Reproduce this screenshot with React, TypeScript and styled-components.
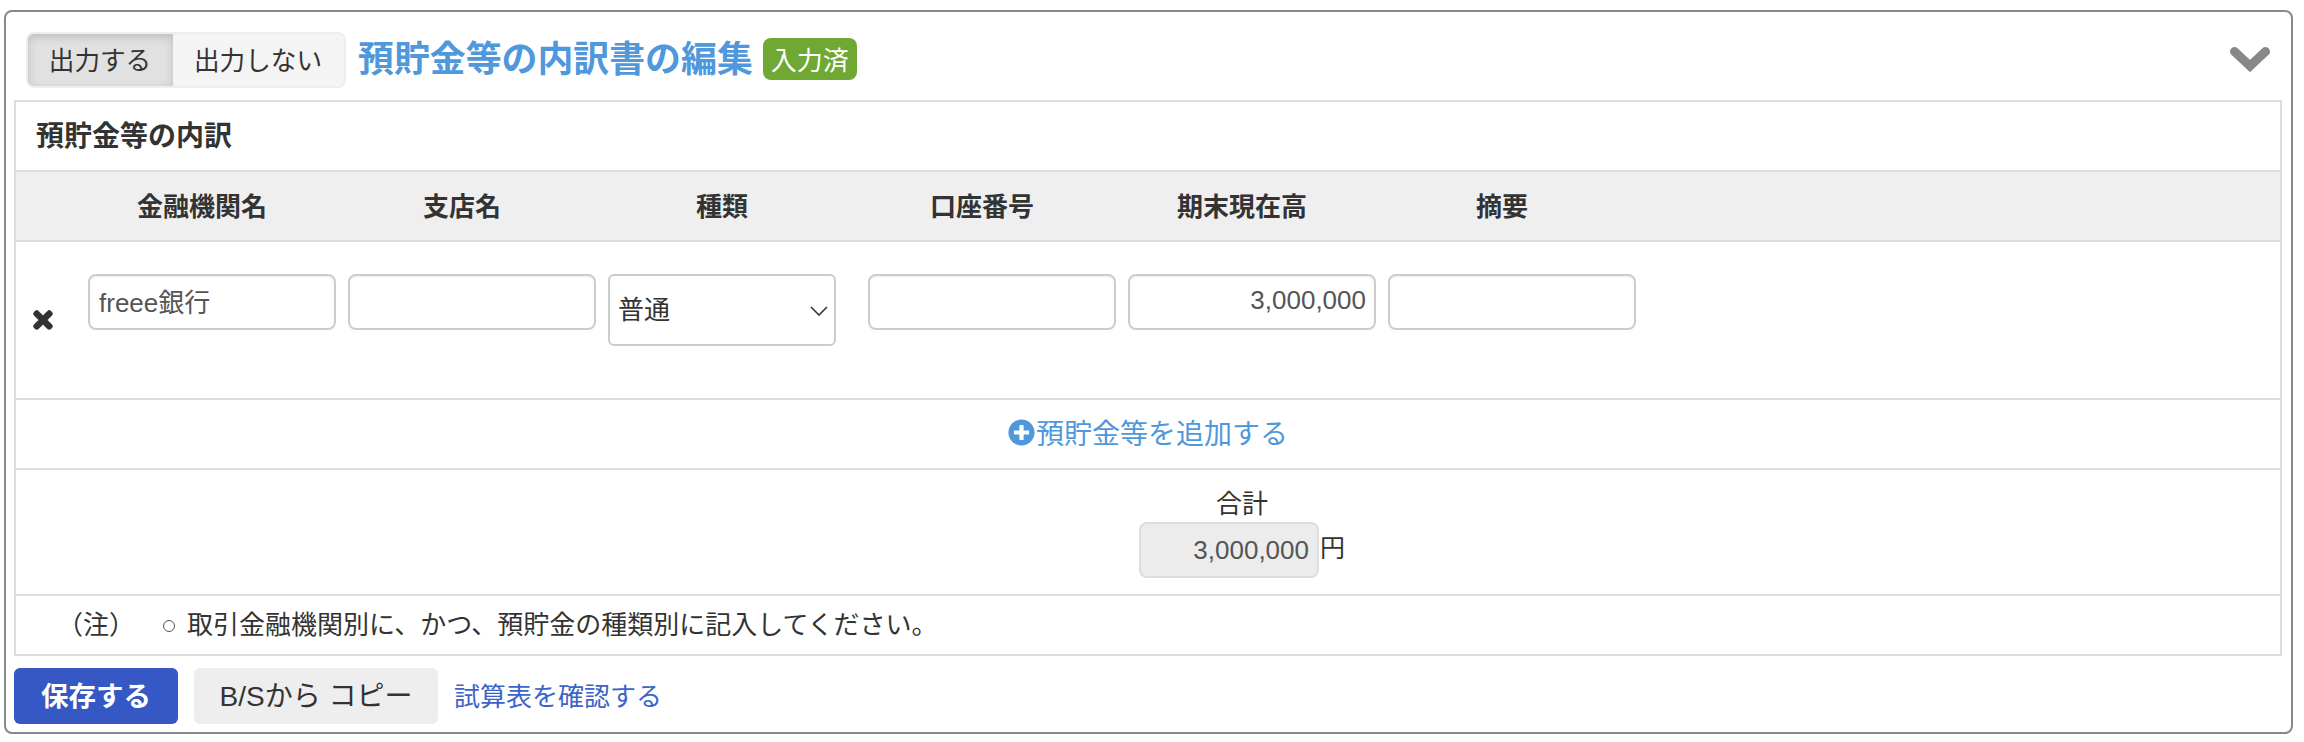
import React from "react";
import styled, { createGlobalStyle } from "styled-components";
import { FaPlusCircle, FaTimes } from "react-icons/fa";

const FONT = `"Liberation Sans", "Noto Sans CJK JP", sans-serif`;

const GlobalStyle = createGlobalStyle`
  * {
    box-sizing: border-box;
  }
  html,
  body {
    margin: 0;
    padding: 0;
    background: #fff;
    font-family: ${FONT};
    color: #333;
  }
`;

const columns = ["金融機関名", "支店名", "種類", "口座番号", "期末現在高", "摘要"];

const App = () => {
  return (
    <Page>
      <GlobalStyle />
      <Panel>
        <PanelHeader>
          <HeaderLeft>
            <Toggle>
              <ToggleButton $active>出力する</ToggleButton>
              <ToggleButton>出力しない</ToggleButton>
            </Toggle>
            <Title>預貯金等の内訳書の編集</Title>
            <Badge>入力済</Badge>
          </HeaderLeft>
          <Chevron viewBox="0 0 40 25" aria-hidden="true">
            <path d="M4.5 4.5 L20 19 L35.5 4.5" />
          </Chevron>
        </PanelHeader>

        <Sheet>
          <SheetTitle>預貯金等の内訳</SheetTitle>
          <ColumnRow>
            <span />
            {columns.map((name) => (
              <ColumnName key={name}>{name}</ColumnName>
            ))}
          </ColumnRow>
          <DataRow>
            <DeleteCell>
              <FaTimes />
            </DeleteCell>
            <TextInput defaultValue="freee銀行" />
            <TextInput />
            <SelectWrap>
              <Select defaultValue="普通">
                <option>普通</option>
                <option>当座</option>
                <option>定期</option>
              </Select>
              <SelectArrow viewBox="0 0 18 10" aria-hidden="true">
                <path d="M1 1 L9 9 L17 1" />
              </SelectArrow>
            </SelectWrap>
            <TextInput />
            <TextInput $right defaultValue="3,000,000" />
            <TextInput />
          </DataRow>
          <AddRow>
            <AddLink href="#">
              <FaPlusCircle />
              預貯金等を追加する
            </AddLink>
          </AddRow>
          <TotalRow>
            <TotalCell>
              <TotalLabel>合計</TotalLabel>
              <TotalLine>
                <TotalInput readOnly value="3,000,000" />
                <Unit>円</Unit>
              </TotalLine>
            </TotalCell>
          </TotalRow>
          <NoteRow>
            <NoteLabel>（注）</NoteLabel>
            <NoteList>
              <NoteItem>取引金融機関別に、かつ、預貯金の種類別に記入してください。</NoteItem>
            </NoteList>
          </NoteRow>
        </Sheet>

        <Footer>
          <SaveButton>保存する</SaveButton>
          <CopyButton>B/Sから コピー</CopyButton>
          <TrialLink href="#">試算表を確認する</TrialLink>
        </Footer>
      </Panel>
    </Page>
  );
};

export default App;

const Page = styled.div`
  width: 2304px;
  height: 742px;
  padding: 10px 11px 0 4px;
  overflow: hidden;
`;

const Panel = styled.section`
  height: 724px;
  border: 2px solid #888;
  border-radius: 8px;
  padding: 20px 9px 8px 8px;
`;

const PanelHeader = styled.header`
  display: flex;
  align-items: center;
  justify-content: space-between;
  height: 56px;
  margin-bottom: 12px;
  padding: 0 12px;
`;

const HeaderLeft = styled.div`
  display: flex;
  align-items: center;
`;

const Toggle = styled.div`
  display: flex;
  width: 320px;
  height: 56px;
  border: 2px solid #eee;
  border-radius: 8px;
  overflow: hidden;
  background: #f5f4f5;
  margin-right: 12px;
`;

const ToggleButton = styled.button<{ $active?: boolean }>`
  flex: ${(p) => (p.$active ? "0 0 145px" : "1")};
  border: 0;
  padding: 0 1px 4px 0;
  font: 25.6px ${FONT};
  color: #333;
  background: ${(p) => (p.$active ? "#e2e1e2" : "transparent")};
  box-shadow: ${(p) => (p.$active ? "inset 0 3px 10px rgba(0, 0, 0, 0.16)" : "none")};
`;

const Title = styled.h1`
  margin: 0 10px 0 0;
  font-size: 35.9px;
  font-weight: 700;
  line-height: 56px;
  color: #4f98dc;
  white-space: nowrap;
`;

const Badge = styled.span`
  display: flex;
  align-items: center;
  justify-content: center;
  width: 94px;
  height: 42px;
  margin-top: -2px;
  padding-bottom: 2px;
  border-radius: 8px;
  background: #6fa832;
  color: #fff;
  font-size: 26px;
`;

const Chevron = styled.svg`
  width: 40px;
  height: 25px;
  margin-top: -2px;
  fill: none;
  stroke: #888;
  stroke-width: 9;
  stroke-linecap: round;
  stroke-linejoin: miter;
`;

const Sheet = styled.div`
  border: 2px solid #ddd;
`;

const SheetTitle = styled.h2`
  margin: 0;
  height: 70px;
  padding: 0 0 4px 20px;
  display: flex;
  align-items: center;
  font-size: 28px;
  font-weight: 700;
  border-bottom: 2px solid #ddd;
`;

const ColumnRow = styled.div`
  display: grid;
  grid-template-columns: 56px repeat(6, 260px);
  align-items: center;
  height: 70px;
  padding-bottom: 4px;
  background: #efefef;
  border-bottom: 2px solid #ddd;
`;

const ColumnName = styled.div`
  text-align: center;
  font-size: 26px;
  font-weight: 700;
`;

const DataRow = styled.div`
  display: grid;
  grid-template-columns: 60px repeat(6, 248px);
  column-gap: 12px;
  align-items: start;
  height: 158px;
  padding-top: 32px;
  border-bottom: 2px solid #ddd;
`;

const DeleteCell = styled.div`
  display: flex;
  justify-content: flex-end;
  padding: 33px 20px 0 0;
  font-size: 26px;
  line-height: 0;
  color: #333;

  svg {
    display: block;
    stroke: currentColor;
    stroke-width: 34;
    stroke-linejoin: round;
  }
`;

const TextInput = styled.input<{ $right?: boolean }>`
  display: block;
  width: 248px;
  height: 56px;
  padding: 0 ${(p) => (p.$right ? "8px" : "10px")} 4px 9px;
  border: 2px solid #ccc;
  border-radius: 8px;
  outline: none;
  background: #fff;
  box-shadow: inset 0 1px 2px rgba(0, 0, 0, 0.08);
  font: 26px ${FONT};
  color: #555;
  text-align: ${(p) => (p.$right ? "right" : "left")};
`;

const SelectWrap = styled.div`
  position: relative;
  width: 228px;
`;

const Select = styled.select`
  display: block;
  width: 100%;
  height: 72px;
  padding: 0 40px 0 8px;
  border: 2px solid #ccc;
  border-radius: 6px;
  outline: none;
  appearance: none;
  background: #fff;
  font: 26px ${FONT};
  color: #333;
`;

const SelectArrow = styled.svg`
  position: absolute;
  top: 32px;
  right: 8px;
  width: 18px;
  height: 10px;
  fill: none;
  stroke: #333;
  stroke-width: 1.6;
  pointer-events: none;
`;

const AddRow = styled.div`
  display: flex;
  align-items: center;
  justify-content: center;
  height: 70px;
  border-bottom: 2px solid #ddd;
`;

const AddLink = styled.a`
  display: flex;
  align-items: center;
  margin-bottom: 4px;
  font-size: 28px;
  color: #4f98dc;
  text-decoration: none;

  svg {
    font-size: 27px;
    margin-right: 1px;
  }
`;

const TotalRow = styled.div`
  display: grid;
  grid-template-columns: 56px repeat(6, 260px);
  height: 126px;
  padding-top: 18px;
  border-bottom: 2px solid #ddd;
`;

const TotalCell = styled.div`
  grid-column: 6;
  display: flex;
  flex-direction: column;
  align-items: center;
`;

const TotalLabel = styled.div`
  font-size: 26px;
  line-height: 32px;
  margin-bottom: 2px;
`;

const TotalLine = styled.div`
  display: flex;
  align-items: flex-start;
`;

const TotalInput = styled.input`
  width: 180px;
  height: 56px;
  padding: 0 8px 0 9px;
  border: 2px solid #ddd;
  border-radius: 8px;
  outline: none;
  background: #ececec;
  font: 26px ${FONT};
  color: #555;
  text-align: right;
`;

const Unit = styled.span`
  margin-left: 1px;
  font-size: 25px;
  line-height: 52px;
`;

const NoteRow = styled.div`
  display: flex;
  align-items: center;
  height: 58px;
  padding: 0 0 5px 41px;
  font-size: 26px;
`;

const NoteLabel = styled.span`
  width: 105px;
  flex: none;
`;

const NoteList = styled.ul`
  margin: 0;
  padding: 0;
  list-style: none;
`;

const NoteItem = styled.li`
  display: flex;
  align-items: center;
  padding-left: 25px;
  position: relative;

  &::before {
    content: "";
    position: absolute;
    left: 1px;
    top: 50%;
    width: 10px;
    height: 10px;
    margin-top: -3px;
    border: 1.5px solid #555;
    border-radius: 50%;
  }
`;

const Footer = styled.footer`
  display: flex;
  align-items: center;
  margin-top: 12px;
`;

const SaveButton = styled.button`
  width: 164px;
  height: 56px;
  border: 0;
  padding: 0 0 4px;
  border-radius: 6px;
  background: #3558c4;
  color: #fff;
  font: 700 27.5px ${FONT};
`;

const CopyButton = styled.button`
  width: 244px;
  height: 56px;
  margin-left: 16px;
  border: 0;
  padding: 0 0 4px;
  border-radius: 6px;
  background: #efeeef;
  color: #333;
  font: 28px ${FONT};
`;

const TrialLink = styled.a`
  margin-left: 16px;
  padding-bottom: 4px;
  font-size: 26px;
  color: #3c63c8;
  text-decoration: none;
`;
